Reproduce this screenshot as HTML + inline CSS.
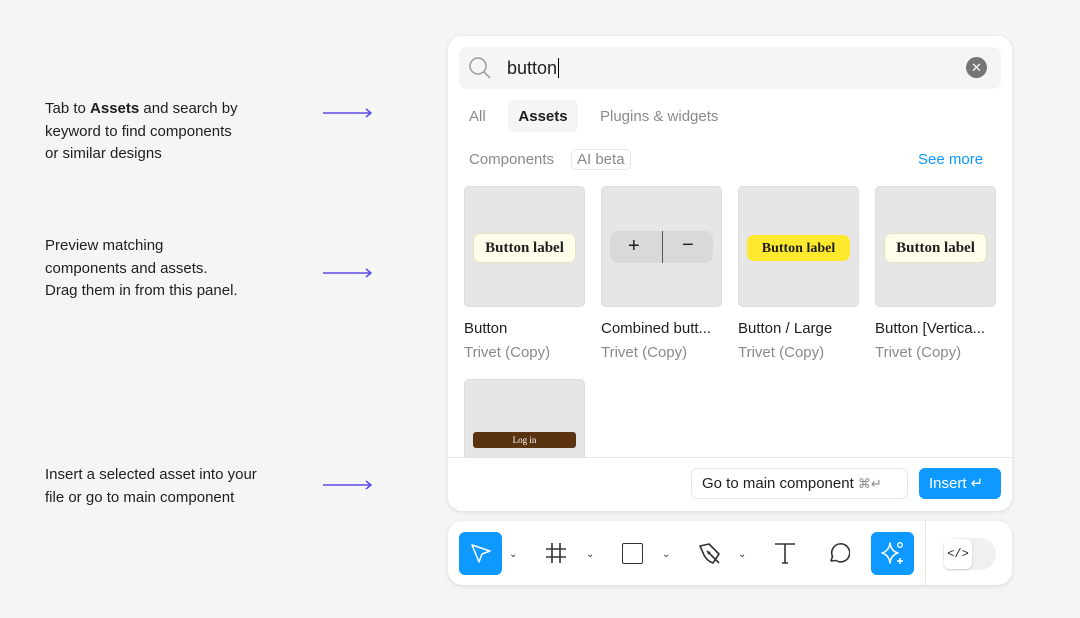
<!DOCTYPE html>
<html><head><style>
*{box-sizing:border-box;margin:0;padding:0}
body{width:1080px;height:618px;background:#f5f5f5;font-family:"Liberation Sans",sans-serif;position:relative;overflow:hidden;color:#1e1e1e}
.a{position:absolute}
.note{position:absolute;left:45px;font-size:15px;line-height:22.5px;color:#1e1e1e}
.arrow{position:absolute;left:323px;width:50px;height:10px}
.panel{position:absolute;left:448px;top:36px;width:564px;height:475px;background:#fff;border-radius:14px;box-shadow:0 1px 4px rgba(0,0,0,.12);overflow:hidden}
.thumb{position:absolute;width:121px;height:121px;background:#e6e6e6;border-radius:5px;border:1px solid #dcdcdc}
.bl{position:absolute;left:8px;right:8px;top:46px;height:30px;border-radius:7px;background:#fdfde9;border:1px solid #e2e2c0;font-family:"Liberation Serif",serif;font-weight:bold;font-size:15px;text-align:center;line-height:28px}
.name{position:absolute;font-size:15px;color:#1e1e1e}
.sub{position:absolute;font-size:15px;color:#8a8a8a}
.tool{position:absolute;top:521px;left:448px;width:564px;height:64px;background:#fff;border-radius:14px;box-shadow:0 1px 4px rgba(0,0,0,.12)}
.chev{position:absolute;top:28px;font-size:10px;color:#333}
</style></head><body>
<div class="note" style="top:98px">Tab to <b>Assets</b> and search by<br>keyword to find components<br>or similar designs</div>
<div class="note" style="top:235px">Preview matching<br>components and assets.<br>Drag them in from this panel.</div>
<div class="note" style="top:464px">Insert a selected asset into your<br>file or go to main component</div>
<svg class="arrow" style="top:108px" viewBox="0 0 50 10"><path d="M0 5H48M43 1L48 5L43 9" stroke="#5b4de8" stroke-width="1.5" fill="none"/></svg>
<svg class="arrow" style="top:268px" viewBox="0 0 50 10"><path d="M0 5H48M43 1L48 5L43 9" stroke="#5b4de8" stroke-width="1.5" fill="none"/></svg>
<svg class="arrow" style="top:480px" viewBox="0 0 50 10"><path d="M0 5H48M43 1L48 5L43 9" stroke="#5b4de8" stroke-width="1.5" fill="none"/></svg>

<div class="panel">
 <div class="a" style="left:11px;top:11px;width:542px;height:42px;background:#f5f5f5;border-radius:8px"></div>
 <svg class="a" style="left:20px;top:20px" width="24" height="24" viewBox="0 0 24 24"><circle cx="10" cy="10" r="8" stroke="#9a9a9a" stroke-width="1.5" fill="none"/><path d="M16 16L22 22" stroke="#9a9a9a" stroke-width="1.5"/></svg>
 <div class="a" style="left:59px;top:22px;font-size:18px">button<span style="border-left:1.5px solid #000;margin-left:1px"></span></div>
 <div class="a" style="left:518px;top:21px;width:21px;height:21px;border-radius:50%;background:#757575;color:#fff;font-size:13px;text-align:center;line-height:21px">✕</div>
 <div class="a" style="left:21px;top:72px;font-size:15px;color:#8a8a8a">All</div>
 <div class="a" style="left:60px;top:64px;width:70px;height:32px;background:#f5f5f5;border-radius:6px;font-size:15px;font-weight:bold;text-align:center;line-height:33px">Assets</div>
 <div class="a" style="left:152px;top:72px;font-size:15px;color:#8a8a8a">Plugins &amp; widgets</div>
 <div class="a" style="left:21px;top:115px;font-size:15px;color:#8a8a8a">Components</div>
 <div class="a" style="left:123px;top:113px;height:21px;padding:0 5px;border:1px solid #e6e6e6;border-radius:5px;font-size:15px;color:#8a8a8a;line-height:20px">AI beta</div>
 <div class="a" style="left:470px;top:115px;font-size:15px;color:#0d99ff">See more</div>

 <div class="thumb" style="left:16px;top:150px"><div class="bl">Button label</div></div>
 <div class="thumb" style="left:153px;top:150px"><div class="a" style="left:8px;right:8px;top:44px;height:32px;background:#d9d9d9;border-radius:8px"><div class="a" style="left:52px;top:0;width:1px;height:32px;background:#555"></div><div class="a" style="left:18px;top:4px;font-size:20px">+</div><div class="a" style="left:72px;top:3px;font-size:20px">−</div></div></div>
 <div class="thumb" style="left:290px;top:150px"><div class="bl" style="background:#ffe92e;border-color:#ffe92e;font-size:14px;top:48px;height:26px;line-height:25px">Button label</div></div>
 <div class="thumb" style="left:427px;top:150px"><div class="bl">Button label</div></div>
 <div class="name" style="left:16px;top:284px">Button</div><div class="sub" style="left:16px;top:308px">Trivet (Copy)</div>
 <div class="name" style="left:153px;top:284px">Combined butt...</div><div class="sub" style="left:153px;top:308px">Trivet (Copy)</div>
 <div class="name" style="left:290px;top:284px">Button / Large</div><div class="sub" style="left:290px;top:308px">Trivet (Copy)</div>
 <div class="name" style="left:427px;top:284px">Button [Vertica...</div><div class="sub" style="left:427px;top:308px">Trivet (Copy)</div>
 <div class="thumb" style="left:16px;top:343px;height:90px;border-radius:5px 5px 0 0"><div class="a" style="left:8px;right:8px;top:52px;height:16px;background:#5a3410;border-radius:3px;color:#fff;font-family:'Liberation Serif',serif;font-size:9px;text-align:center;line-height:16px">Log in</div></div>
 <div class="a" style="left:0;top:421px;width:564px;height:54px;background:#fff;border-top:1px solid #e6e6e6"></div>
 <div class="a" style="left:243px;top:432px;width:217px;height:31px;border:1px solid #e6e6e6;border-radius:6px;font-size:15px;line-height:30px;padding-left:10px">Go to main component <span style="color:#8a8a8a;font-size:13px">⌘↵</span></div>
 <div class="a" style="left:471px;top:432px;width:82px;height:31px;background:#0d99ff;border-radius:6px;color:#fff;font-size:15px;line-height:32px;padding-left:10px">Insert ↵</div>
</div>

<div class="tool">
 <div class="a" style="left:11px;top:11px;width:43px;height:43px;background:#0d99ff;border-radius:6px"></div>
 <svg class="a" style="left:21px;top:21px" width="24" height="24" viewBox="0 0 24 24"><path d="M3 3L21 9L13 12L10 20Z" stroke="#fff" stroke-width="1.5" fill="none" stroke-linejoin="round"/></svg>
 <div class="chev" style="left:61px">⌄</div>
 <svg class="a" style="left:97px;top:21px" width="22" height="22" viewBox="0 0 22 22"><path d="M7 1V21M15 1V21M1 7H21M1 15H21" stroke="#333" stroke-width="1.6"/></svg>
 <div class="chev" style="left:138px">⌄</div>
 <div class="a" style="left:174px;top:22px;width:21px;height:21px;border:1.6px solid #333;border-radius:2px"></div>
 <div class="chev" style="left:214px">⌄</div>
 <svg class="a" style="left:249px;top:20px" width="26" height="26" viewBox="0 0 26 26"><path d="M3 5L12 3L22 13L16 22Q10 20 7 14Z M10 10L22 22" stroke="#333" stroke-width="1.6" fill="none" stroke-linejoin="round"/><circle cx="12" cy="12" r="1.5" fill="#333"/></svg>
 <div class="chev" style="left:290px">⌄</div>
 <svg class="a" style="left:326px;top:21px" width="22" height="22" viewBox="0 0 22 22"><path d="M1 2H21M11 2V21M8 21H14" stroke="#333" stroke-width="1.6" fill="none"/></svg>
 <svg class="a" style="left:380px;top:21px" width="22" height="22" viewBox="0 0 22 22"><path d="M3 19L4.5 14.5A9 9 0 1 1 8 18.5Z" stroke="#333" stroke-width="1.6" fill="none" stroke-linejoin="round"/></svg>
 <div class="a" style="left:423px;top:11px;width:43px;height:43px;background:#0d99ff;border-radius:6px"></div>
 <svg class="a" style="left:430px;top:17px" width="30" height="30" viewBox="0 0 30 30"><path d="M12 5Q13 13 20 15Q13 17 12 25Q11 17 4 15Q11 13 12 5Z" stroke="#fff" stroke-width="1.5" fill="none" stroke-linejoin="round"/><circle cx="22" cy="7" r="2.3" stroke="#fff" stroke-width="1.3" fill="none"/><path d="M22 20V26M19 23H25" stroke="#fff" stroke-width="1.5"/></svg>
 <div class="a" style="left:477px;top:0;width:1px;height:64px;background:#e6e6e6"></div>
 <div class="a" style="left:495px;top:17px;width:53px;height:32px;background:#f0f0f0;border-radius:16px"></div>
 <div class="a" style="left:496px;top:18px;width:28px;height:30px;background:#fff;border-radius:6px;box-shadow:0 1px 2px rgba(0,0,0,.2);font-size:12px;text-align:center;line-height:30px;font-family:'Liberation Mono',monospace">&lt;/&gt;</div>
</div>
</body></html>
